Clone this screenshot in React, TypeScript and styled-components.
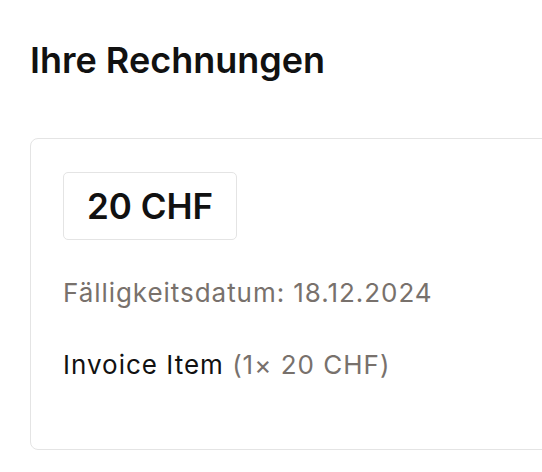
import React from 'react';
import styled, { createGlobalStyle } from 'styled-components';

const GlobalStyle = createGlobalStyle`
  html, body {
    margin: 0;
    padding: 0;
    background: #ffffff;
    overflow: hidden;
  }
  body {
    font-family: Inter, "Noto Sans", sans-serif;
    color: #111111;
  }
`;

const Page = styled.div`
  width: 600px;
  padding: 38px 0 0 30px;
`;

const Title = styled.h1`
  margin: 0 0 56px 0;
  font-size: 36px;
  font-weight: 600;
  line-height: 44px;
  color: #111111;
`;

const InvoiceCard = styled.section`
  border: 1px solid #e4e4e4;
  border-radius: 8px;
  padding: 33px 32px 67px;
`;

const AmountBadge = styled.div`
  box-sizing: border-box;
  display: inline-flex;
  align-items: center;
  height: 68px;
  padding: 0 23px;
  border: 1px solid #e4e4e4;
  border-radius: 5px;
  font-size: 35px;
  font-weight: 600;
  color: #111111;
`;

const DueDate = styled.p`
  margin: 36px 0 0 0;
  font-size: 26px;
  line-height: 34px;
  letter-spacing: 0.95px;
  color: #78716c;
`;

const ItemLine = styled.p`
  margin: 38px 0 0 0;
  font-size: 26px;
  line-height: 34px;
  letter-spacing: 1px;
  color: #111111;
`;

const ItemMeta = styled.span`
  color: #78716c;
`;

export default function App() {
  return (
    <>
      <GlobalStyle />
      <Page>
        <Title>Ihre Rechnungen</Title>
        <InvoiceCard>
          <AmountBadge>20 CHF</AmountBadge>
          <DueDate>Fälligkeitsdatum: 18.12.2024</DueDate>
          <ItemLine>
            Invoice Item <ItemMeta>(1× 20 CHF)</ItemMeta>
          </ItemLine>
        </InvoiceCard>
      </Page>
    </>
  );
}
